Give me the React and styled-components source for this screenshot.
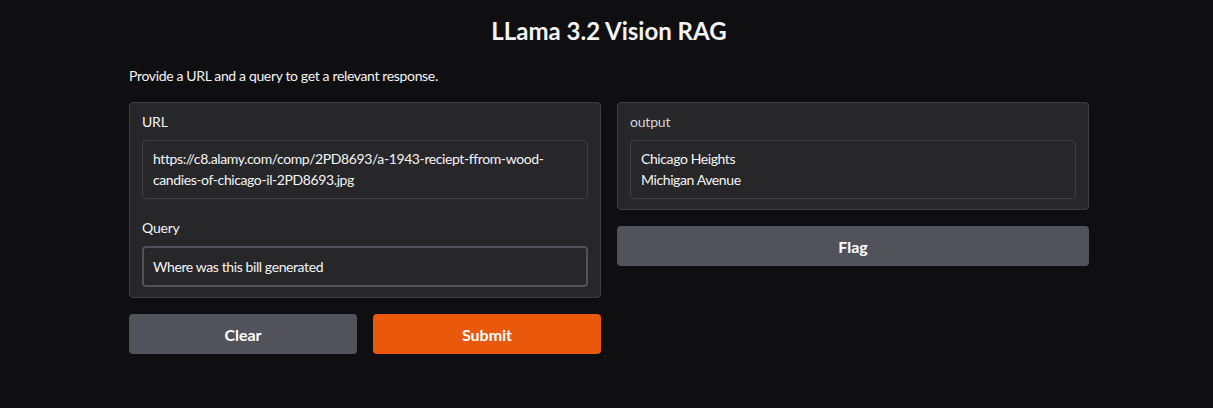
import styled, { createGlobalStyle } from 'styled-components';

const GlobalStyle = createGlobalStyle`
  html, body {
    margin: 0;
    padding: 0;
    background: #0f0f11;
    font-family: Lato, "Noto Sans", "Liberation Sans", sans-serif;
    color: #f4f4f5;
  }
`;

const Page = styled.div`
  width: 960px;
  margin: 0 0 0 129px;
  padding-top: 16px;
`;

const Title = styled.h1`
  margin: 0;
  text-align: center;
  font-size: 24px;
  font-weight: 700;
  line-height: 30px;
  color: #f4f4f5;
`;

const Description = styled.p`
  margin: 21px 0 17px;
  font-size: 14px;
  line-height: 18px;
  letter-spacing: -0.35px;
  color: #f4f4f5;
`;

const Columns = styled.div`
  display: grid;
  grid-template-columns: 1fr 1fr;
  gap: 16px;
  align-items: start;
`;

const Column = styled.div`
  display: flex;
  flex-direction: column;
  gap: 16px;
`;

const Panel = styled.div`
  background: #27272a;
  border: 1px solid #3f3f46;
  border-radius: 4px;
  padding: 10px 12px 10px;
  display: flex;
  flex-direction: column;
  gap: 20px;
`;

const Field = styled.div`
  display: flex;
  flex-direction: column;
`;

const Label = styled.span`
  font-size: 14px;
  line-height: 18px;
  margin-bottom: 9px;
  letter-spacing: -0.2px;
  color: ${({ $muted }) => ($muted ? '#d4d4d8' : '#f4f4f5')};
`;

const Box = styled.div`
  background: #27272a;
  border: ${({ $focus }) => ($focus ? '2px solid #52525b' : '1px solid #3f3f46')};
  border-radius: 4px;
  padding: ${({ $focus }) => ($focus ? '8px 9px' : '7px 10px 8px')};
  font-size: 14px;
  line-height: 21px;
  letter-spacing: -0.4px;
  color: #f4f4f5;
  min-height: ${({ $focus }) => ($focus ? '21px' : '40px')};
  white-space: pre-line;
`;

const Buttons = styled.div`
  display: grid;
  grid-template-columns: 1fr 1fr;
  gap: 16px;
`;

const Button = styled.button`
  height: 40px;
  border: none;
  border-radius: 4px;
  background: ${({ $primary }) => ($primary ? '#ea580c' : '#52525b')};
  color: #ffffff;
  font-family: inherit;
  font-size: 16px;
  font-weight: 700;
  cursor: pointer;
`;

const App = () => {
  return (
    <>
      <GlobalStyle />
      <Page>
        <Title>LLama 3.2 Vision RAG</Title>
        <Description>Provide a URL and a query to get a relevant response.</Description>
        <Columns>
          <Column>
            <Panel>
              <Field>
                <Label>URL</Label>
                <Box>
                  https://c8.alamy.com/comp/2PD8693/a-1943-reciept-ffrom-wood-candies-of-chicago-il-2PD8693.jpg
                </Box>
              </Field>
              <Field>
                <Label>Query</Label>
                <Box $focus>Where was this bill generated</Box>
              </Field>
            </Panel>
            <Buttons>
              <Button>Clear</Button>
              <Button $primary>Submit</Button>
            </Buttons>
          </Column>
          <Column>
            <Panel>
              <Field>
                <Label $muted>output</Label>
                <Box>{'Chicago Heights\nMichigan Avenue'}</Box>
              </Field>
            </Panel>
            <Button>Flag</Button>
          </Column>
        </Columns>
      </Page>
    </>
  );
};

export default App;
